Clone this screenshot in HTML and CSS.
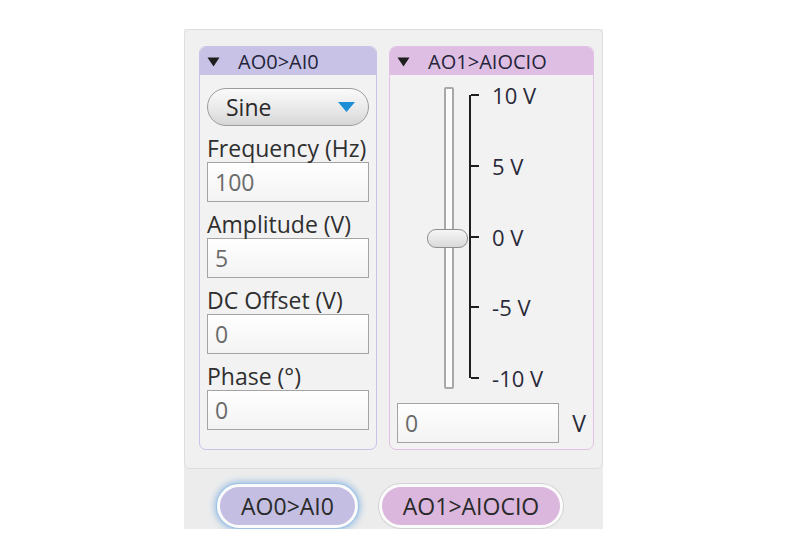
FILE: index.html
```html
<!DOCTYPE html>
<html lang="en">
<head>
    <meta charset="UTF-8">
    <title>AO Signal Generator</title>
    <link rel="stylesheet" href="styles.css">
</head>
<body>
    <div class="window">
        <div class="panel">
            <div class="group group-ao0">
                <div class="group-header">
                    <svg class="caret" width="13" height="10" viewBox="0 0 13 10"><polygon points="0.5,0.5 12.5,0.5 6.5,9.5" fill="#1e1e1e"/></svg>
                    <span>AO0&gt;AI0</span>
                </div>
                <div class="group-body">
                    <div class="dropdown">
                        <span>Sine</span>
                        <svg width="17" height="10" viewBox="0 0 17 10"><polygon points="0,0 17,0 8.5,10" fill="#1c8fd6"/></svg>
                    </div>
                    <div class="label">Frequency (Hz)</div>
                    <div class="field">100</div>
                    <div class="label">Amplitude (V)</div>
                    <div class="field">5</div>
                    <div class="label">DC Offset (V)</div>
                    <div class="field">0</div>
                    <div class="label">Phase (°)</div>
                    <div class="field">0</div>
                </div>
            </div>

            <div class="group group-ao1">
                <div class="group-header">
                    <svg class="caret" width="13" height="10" viewBox="0 0 13 10"><polygon points="0.5,0.5 12.5,0.5 6.5,9.5" fill="#1e1e1e"/></svg>
                    <span>AO1&gt;AIOCIO</span>
                </div>
                <div class="group-body slider-body">
                    <div class="slider">
                        <div class="track">
                            <div class="thumb"></div>
                        </div>
                        <div class="scale">
                            <div class="tick"><span>10 V</span></div>
                            <div class="tick"><span>5 V</span></div>
                            <div class="tick"><span>0 V</span></div>
                            <div class="tick"><span>-5 V</span></div>
                            <div class="tick"><span>-10 V</span></div>
                        </div>
                    </div>
                    <div class="value-row">
                        <div class="field value">0</div>
                        <span class="unit">V</span>
                    </div>
                </div>
            </div>
        </div>

        <div class="tabbar">
            <div class="tab tab-ao0 active">AO0&gt;AI0</div>
            <div class="tab tab-ao1">AO1&gt;AIOCIO</div>
        </div>
    </div>
</body>
</html>
```

FILE: styles.css
```css
body {
    margin: 0;
    background-color: #ffffff;
    font-family: "Open Sans", "Liberation Sans", sans-serif;
    color: #2e2e2e;
}
.window {
    margin: 29px 0 0 184px;
    width: 419px;
    background-color: #ececec;
}
.panel {
    display: flex;
    gap: 12px;
    height: 440px;
    padding: 16px 8px 0 14px;
    box-sizing: border-box;
    background-color: #f0f0f0;
    border: 1px solid #dedede;
    border-radius: 6px;
}
.group {
    height: 404px;
    box-sizing: border-box;
    border-radius: 7px;
    background-color: #f2f2f2;
    overflow: hidden;
}
.group-ao0 {
    width: 179px;
    border: 1px solid #c9c3e8;
}
.group-ao1 {
    width: 206px;
    border: 1px solid #e2c2e4;
}
.group-header {
    height: 28px;
    display: flex;
    align-items: center;
    gap: 18px;
    padding-left: 7px;
    font-size: 20px;
    color: #25253a;
}
.group-ao0 .group-header {
    background-color: #c7c2e6;
}
.group-ao1 .group-header {
    background-color: #dfbee4;
}
.caret {
    margin-top: 1px;
}
.group-body {
    padding: 13px 7px 0 7px;
}
.dropdown {
    height: 38px;
    box-sizing: border-box;
    border: 1px solid #9c9c9c;
    border-radius: 19px;
    background: linear-gradient(#fafafa, #e9e9e9 55%, #d6d6d6);
    display: flex;
    align-items: center;
    justify-content: space-between;
    padding: 0 13px 0 18px;
    font-size: 23px;
    color: #2a2a2a;
}
.label {
    padding-top: 9px;
    height: 27px;
    line-height: 26px;
    font-size: 23px;
    white-space: nowrap;
    color: #2f2f2f;
}
.field {
    height: 40px;
    box-sizing: border-box;
    border: 1px solid #a4a4a4;
    background: linear-gradient(#ffffff, #f3f3f3);
    padding: 6px 7px;
    font-size: 23px;
    line-height: 26px;
    color: #6b6b6b;
}
.slider-body {
    padding-top: 12px;
}
.slider {
    display: flex;
    height: 302px;
    padding-left: 47px;
}
.track {
    position: relative;
    width: 10px;
    height: 302px;
    box-sizing: border-box;
    border: 2px solid #a8a8a8;
    border-radius: 2px;
    background-color: #fbfbfb;
}
.thumb {
    position: absolute;
    left: -19px;
    top: 140px;
    width: 41px;
    height: 19px;
    box-sizing: border-box;
    border: 1px solid #8f8f8f;
    border-radius: 9px;
    background: linear-gradient(#f6f6f6, #d9d9d9);
}
.scale {
    margin: 8px 0 0 15px;
    height: 283px;
    border-left: 2px solid #1e1e1e;
    display: flex;
    flex-direction: column;
    justify-content: space-between;
}
.tick {
    height: 0;
    display: flex;
    align-items: center;
}
.tick::before {
    content: '';
    width: 8px;
    height: 2px;
    background-color: #1e1e1e;
}
.tick span {
    margin-left: 13px;
    font-size: 22px;
    line-height: 26px;
    white-space: nowrap;
    color: #2a2a3a;
}
.value-row {
    display: flex;
    align-items: center;
    margin-top: 14px;
}
.value {
    width: 163px;
}
.unit {
    margin-left: 13px;
    font-size: 23px;
    color: #2a2a3a;
}
.tabbar {
    height: 60px;
    display: flex;
    align-items: flex-start;
    gap: 21px;
    padding: 15px 0 0 33px;
    box-sizing: border-box;
}
.tab {
    height: 44px;
    box-sizing: border-box;
    border: 3px solid #fbfbfb;
    border-radius: 22px;
    display: flex;
    align-items: center;
    justify-content: center;
    font-size: 23px;
    color: #2a2a2a;
    box-shadow: 0 0 0 1px #d2d2d2;
}
.tab-ao0 {
    width: 141px;
    background-color: #c4bfe2;
}
.tab-ao0.active {
    box-shadow: 0 0 0 1px #9cc3e6, 0 0 7px 2px #8fb9e2;
}
.tab-ao1 {
    width: 184px;
    background-color: #dbb7dd;
}
```
